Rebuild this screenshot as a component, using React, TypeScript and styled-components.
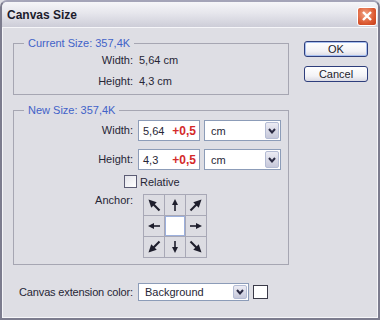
import React from 'react';
import styled, { createGlobalStyle } from 'styled-components';

const GlobalStyle = createGlobalStyle`
  html, body {
    margin: 0;
    padding: 0;
    background: #dedee4;
  }
`;

const Window = styled.div`
  width: 380px;
  height: 320px;
  box-sizing: border-box;
  display: flex;
  flex-direction: column;
  border: 2px solid #7c7c8e;
  border-top-color: #a4a4b8;
  border-radius: 7px 7px 0 0;
  background: #dedee4;
  overflow: hidden;
  font-family: 'Liberation Sans', Arial, sans-serif;
  font-size: 11px;
  color: #262636;
`;

const TitleBar = styled.div`
  height: 25px;
  flex: none;
  display: flex;
  align-items: center;
  justify-content: space-between;
  padding: 0 1px 0 5px;
  background: linear-gradient(#f6f6f9 0%, #e6e6ec 45%, #cdcdd8 100%);
`;

const Title = styled.span`
  font-size: 12px;
  font-weight: bold;
  color: #1c1c2c;
`;

const CloseButton = styled.div`
  width: 20px;
  height: 19px;
  box-sizing: border-box;
  margin-top: 3px;
  border: 1px solid #ffffff;
  border-radius: 3px;
  display: flex;
  align-items: center;
  justify-content: center;
  background: radial-gradient(circle at 40% 35%, #f2a486, #dc5a32 60%, #c23c1a);
`;

const Body = styled.div`
  flex: 1;
  border: 1px solid #f6f6f9;
  display: grid;
  grid-template-columns: 276px 64px;
  grid-template-rows: auto 1fr;
  column-gap: 15px;
  padding: 9px 0 0 10px;
`;

const Groups = styled.div`
  display: flex;
  flex-direction: column;
  gap: 9px;
`;

const Group = styled.fieldset<{ $bottom: number }>`
  margin: 0;
  padding: 0 0 ${(p) => p.$bottom}px;
  min-width: 0;
  border: 1px solid #a6a6b2;
`;

const Legend = styled.legend`
  margin-left: 10px;
  padding: 0 4px;
  color: #4262c8;
  line-height: 13px;
`;

const InfoGrid = styled.div`
  display: grid;
  grid-template-columns: 119px auto;
  column-gap: 6px;
  line-height: 21px;
`;

const InfoLabel = styled.span`
  text-align: right;
`;

const FieldLabel = styled.span`
  width: 119px;
  flex: none;
  text-align: right;
  line-height: 13px;
`;

const FormRow = styled.div<{ $gap: number; $top?: boolean }>`
  display: flex;
  align-items: ${(p) => (p.$top ? 'flex-start' : 'center')};
  margin-top: ${(p) => p.$gap}px;
`;

const NumberBox = styled.div`
  width: 62px;
  height: 21px;
  box-sizing: border-box;
  margin: 0 4px 0 5px;
  padding: 0 3px 0 4px;
  display: flex;
  align-items: center;
  justify-content: space-between;
  border: 1px solid #8c9cb8;
  background: #ffffff;
`;

const Delta = styled.span`
  color: #d42a2a;
  font-weight: bold;
  font-size: 12px;
`;

const Select = styled.div<{ $width: number; $height: number }>`
  width: ${(p) => p.$width}px;
  height: ${(p) => p.$height}px;
  box-sizing: border-box;
  display: flex;
  align-items: center;
  justify-content: space-between;
  padding: 1px 1px 1px 6px;
  border: 1px solid #8c9cb8;
  background: #ffffff;
`;

const SelectArrow = styled.div`
  width: 14px;
  align-self: stretch;
  box-sizing: border-box;
  display: flex;
  align-items: center;
  justify-content: center;
  border: 1px solid #b4bcd4;
  border-radius: 2px;
  background: linear-gradient(#ececf4, #c6c8da);
`;

const CheckRow = styled.label`
  display: flex;
  align-items: center;
  gap: 3px;
  padding-left: 110px;
`;

const CheckBox = styled.span`
  width: 13px;
  height: 13px;
  box-sizing: border-box;
  border: 1px solid #5c5c74;
  background: linear-gradient(135deg, #e4e4ea, #ffffff);
`;

const AnchorGrid = styled.div`
  margin-left: 10px;
  display: grid;
  grid-template-columns: repeat(3, 20px);
  grid-template-rows: repeat(3, 20px);
  gap: 1px;
  padding: 1px;
  background: #a8a8b6;
`;

const AnchorCell = styled.div<{ $selected?: boolean }>`
  display: flex;
  align-items: center;
  justify-content: center;
  box-sizing: border-box;
  background: ${(p) => (p.$selected ? '#ffffff' : '#dcdce2')};
  border: ${(p) => (p.$selected ? '1px solid #9cb0dc' : 'none')};
`;

const ArrowSvg = styled.svg<{ $angle: number; $diag: boolean }>`
  transform: rotate(${(p) => p.$angle}deg) scale(${(p) => (p.$diag ? 1.3 : 1)});
`;

const Buttons = styled.div`
  display: flex;
  flex-direction: column;
  gap: 9px;
  padding-top: 4px;
`;

const DialogButton = styled.button<{ $default?: boolean }>`
  width: 64px;
  height: 16px;
  box-sizing: border-box;
  padding: 0;
  font: inherit;
  line-height: 12px;
  color: #1c1c2c;
  border: 1px solid #2e3e7c;
  border-radius: 3px;
  background: linear-gradient(#ffffff, #f2f2f6 65%, #dadae4);
  box-shadow: ${(p) => (p.$default ? 'inset 0 0 0 1px #a8c0f0' : 'none')};
`;

const Footer = styled.div`
  grid-column: 1 / -1;
  display: flex;
  align-items: center;
  margin-top: 18px;
  align-self: start;
`;

const FooterLabel = styled.span`
  width: 120px;
  margin-right: 5px;
  text-align: right;
  letter-spacing: -0.15px;
`;

const Swatch = styled.span`
  width: 15px;
  height: 14px;
  box-sizing: border-box;
  margin-left: 4px;
  border: 1px solid #3a3a48;
  background: #ffffff;
`;

const Chevron = () => (
  <svg width="8" height="6" viewBox="0 0 8 6">
    <path d="M1 1 L4 4.5 L7 1" fill="none" stroke="#2c2c44" strokeWidth="2" />
  </svg>
);

const Arrow = ({ angle }: { angle: number }) => (
  <ArrowSvg $angle={angle} $diag={angle % 90 !== 0} width="14" height="14" viewBox="0 0 14 14">
    <path d="M7 1 L10 7 L4 7 Z" fill="#1e1e2c" />
    <rect x="6.2" y="6" width="1.6" height="7" fill="#1e1e2c" />
  </ArrowSvg>
);

const anchorAngles: (number | null)[] = [-45, 0, 45, -90, null, 90, -135, 180, 135];

const sizeRows = [
  { label: 'Width:', value: '5,64', gap: 3 },
  { label: 'Height:', value: '4,3', gap: 8 },
];

export default function App() {
  return (
    <>
      <GlobalStyle />
      <Window>
        <TitleBar>
          <Title>Canvas Size</Title>
          <CloseButton>
            <svg width="12" height="12" viewBox="0 0 12 12">
              <path d="M2 2 L10 10 M10 2 L2 10" stroke="#ffffff" strokeWidth="2.4" />
            </svg>
          </CloseButton>
        </TitleBar>
        <Body>
          <Groups>
            <Group $bottom={2}>
              <Legend>Current Size: 357,4K</Legend>
              <InfoGrid>
                <InfoLabel>Width:</InfoLabel>
                <span>5,64 cm</span>
                <InfoLabel>Height:</InfoLabel>
                <span>4,3 cm</span>
              </InfoGrid>
            </Group>
            <Group $bottom={6}>
              <Legend>New Size: 357,4K</Legend>
              {sizeRows.map((row) => (
                <FormRow key={row.label} $gap={row.gap}>
                  <FieldLabel>{row.label}</FieldLabel>
                  <NumberBox>
                    <span>{row.value}</span>
                    <Delta>+0,5</Delta>
                  </NumberBox>
                  <Select $width={77} $height={21}>
                    <span>cm</span>
                    <SelectArrow><Chevron /></SelectArrow>
                  </Select>
                </FormRow>
              ))}
              <FormRow $gap={5}>
                <CheckRow>
                  <CheckBox />
                  <span>Relative</span>
                </CheckRow>
              </FormRow>
              <FormRow $gap={6} $top>
                <FieldLabel>Anchor:</FieldLabel>
                <AnchorGrid>
                  {anchorAngles.map((a, i) => (
                    <AnchorCell key={i} $selected={a === null}>
                      {a !== null && <Arrow angle={a} />}
                    </AnchorCell>
                  ))}
                </AnchorGrid>
              </FormRow>
            </Group>
          </Groups>
          <Buttons>
            <DialogButton $default>OK</DialogButton>
            <DialogButton>Cancel</DialogButton>
          </Buttons>
          <Footer>
            <FooterLabel>Canvas extension color:</FooterLabel>
            <Select $width={111} $height={18}>
              <span>Background</span>
              <SelectArrow><Chevron /></SelectArrow>
            </Select>
            <Swatch />
          </Footer>
        </Body>
      </Window>
    </>
  );
}
